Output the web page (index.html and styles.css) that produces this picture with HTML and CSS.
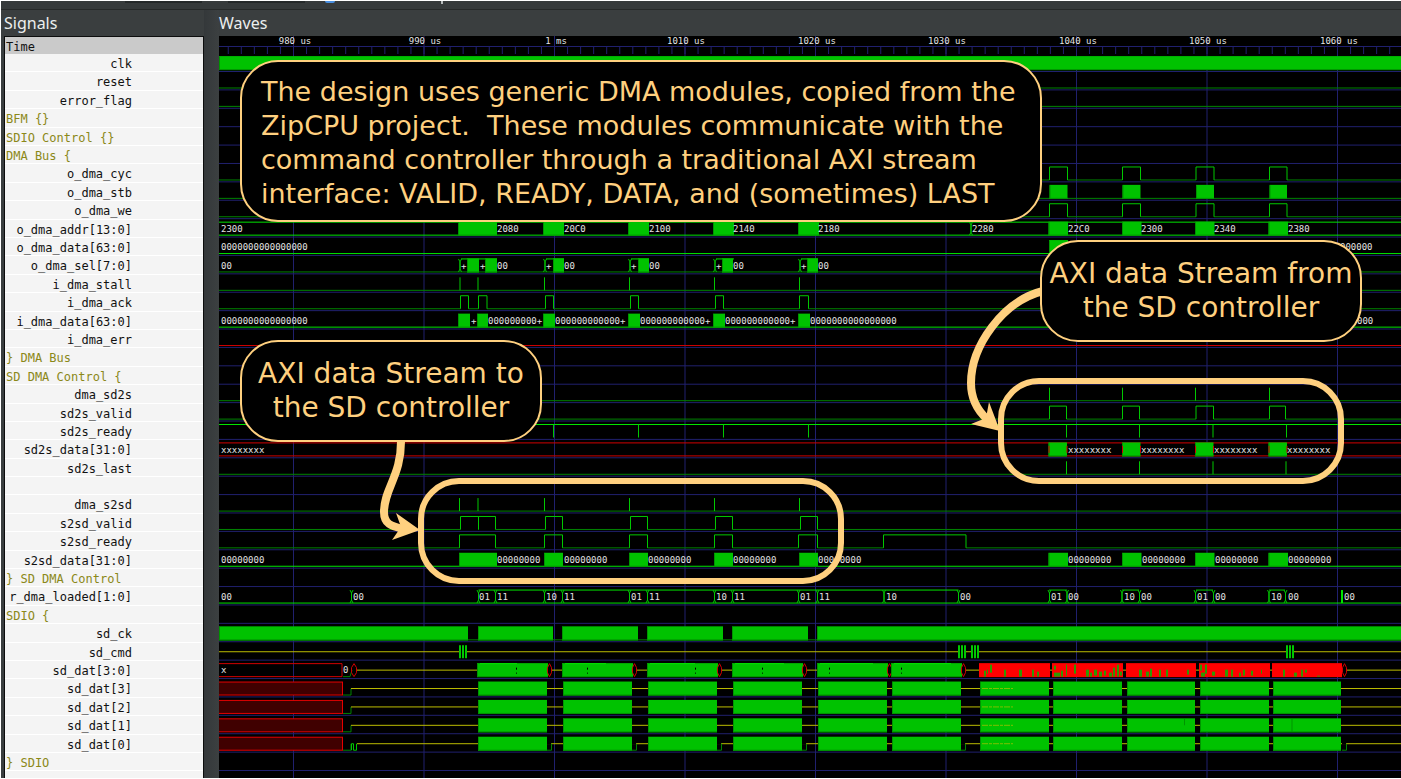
FILE: index.html
```html
<!DOCTYPE html>
<html lang="en">
<head>
<meta charset="utf-8">
<title>Waveform viewer</title>
<link rel="stylesheet" href="styles.css">
</head>
<body>
<header class="toolbar" aria-hidden="true">
  <span class="slot slot-a"></span><span class="slot slot-b"></span><span class="dot"></span><span class="stem"></span>
</header>
<main class="panes">
  <section class="signals">
    <h2 class="title">Signals</h2>
    <div class="list">
      <div class="time">Time</div>
      <ul class="names" id="names"></ul>
    </div>
  </section>
  <div class="divider" aria-hidden="true"></div>
  <section class="waves">
    <h2 class="title">Waves</h2>
    <div class="view">
      <svg class="plot" id="plot" role="img" aria-label="Signal waveforms"></svg>
      <svg class="marks" aria-hidden="true">
        <rect class="ring" x="202" y="445" width="420" height="100" rx="38"/>
        <rect class="ring" x="782" y="345" width="340" height="100" rx="38"/>
        <path class="arrow" d="M182 402C183 440 165 452 165 476C165 488 172 490 184 493"/>
        <path class="head" d="M201 494L177 477L182 491L173 504Z"/>
        <path class="arrow" d="M824 255C784 265 752 310 752 347C752 362 758 374 768 383"/>
        <path class="head" d="M781 395L770 366L767 382L752 388Z"/>
      </svg>
      <p class="note note-design">The design uses generic DMA modules, copied from the<br>ZipCPU project.&nbsp; These modules communicate with the<br>command controller through a traditional AXI stream<br>interface: VALID, READY, DATA, and (sometimes) LAST</p>
      <p class="note note-to">AXI data Stream to<br>the SD controller</p>
      <p class="note note-from">AXI data Stream from<br>the SD controller</p>
    </div>
  </section>
</main>
<script src="waves.js"></script>
</body>
</html>
```
FILE: styles.css
```css
* { box-sizing: border-box; }
body {
  margin: 0;
  height: 100vh;
  min-height: 500px;
  display: flex;
  flex-direction: column;
  border: 1px solid #fff;
  border-right: 0;
  background: #3a3e3f;
  overflow: hidden;
  font-family: "Noto Sans", sans-serif;
}
.toolbar {
  flex: none;
  height: 9px;
  display: flex;
  align-items: flex-start;
  background: #363a3b;
  border-bottom: 1px solid #262929;
}
.slot { height: 2px; background: #25292a; width: 77px; }
.slot-a { margin-left: 124px; }
.slot-b { margin-left: 26px; }
.dot { width: 10px; height: 2px; margin-left: 20px; background: #4a90e2; border-radius: 0 0 5px 5px; }
.stem { width: 2px; height: 3px; margin-left: 106px; background: #b8bcbc; }
.panes { flex: 1; min-height: 0; display: flex; }
.signals { width: 203px; flex: none; display: flex; flex-direction: column; padding-left: 3px; }
.waves { flex: 1; min-width: 0; display: flex; flex-direction: column; }
.title {
  margin: 0;
  height: 26px;
  flex: none;
  font-size: 16px;
  line-height: 26px;
  font-weight: 400;
  color: #eceeee;
}
.divider { width: 15px; flex: none; background: linear-gradient(90deg, #34383a, #3c4041); }
.list {
  flex: 1;
  min-height: 0;
  display: flex;
  flex-direction: column;
  border: solid #0c0d0d;
  border-width: 1px 1px 0;
  background: #f4f4f4;
  font: 12px/20px "DejaVu Sans Mono", monospace;
  color: #111;
}
.time { flex: none; height: 17px; padding-left: 1px; background: #cacaca; }
.names {
  flex: 1;
  min-height: 0;
  margin: 0;
  padding: 0;
  list-style: none;
  display: grid;
  grid-template-rows: repeat(39, 184fr) 66fr;
}
.name {
  min-height: 0;
  padding-right: 71px;
  text-align: right;
  white-space: pre;
  border-bottom: 1px solid #fff;
}
.group { text-align: left; padding: 0 0 0 1px; color: #8b8818; }
.view { position: relative; flex: 1; min-height: 0; overflow: hidden; background: #000; }
.plot, .marks { position: absolute; inset: 0; width: 100%; height: 100%; }
.plot text { font: 9px "DejaVu Sans Mono", monospace; fill: #e4e4e4; white-space: pre; }
.plot path { fill: none; }
.plot .grid { stroke: #20206e; }
.plot .low { stroke: #008400; }
.plot .high { stroke: #00c800; }
.plot .bus { stroke: #00e400; }
.plot .bad { stroke: #d00000; }
.plot .mid { stroke: #bcbc00; }
.plot .mid-dash { stroke: #7cc000; stroke-dasharray: 6 1 3 1; }
.plot .block { fill: #00c200; }
.plot .edge { stroke: #009400; }
.plot .unknown { fill: #400000; stroke: #e40000; }
.plot .red { fill: #ff0000; }
.plot .spark { fill: #309800; }
.ring { fill: none; stroke: #ffd07f; stroke-width: 6; }
.arrow { fill: none; stroke: #ffd07f; stroke-width: 8; }
.head { fill: #ffd07f; }
.note {
  position: absolute;
  margin: 0;
  border: 2px solid #ffd07f;
  border-radius: 38px;
  background: #000;
  color: #ffd07f;
  font: 28px/34px "DejaVu Sans", sans-serif;
  white-space: nowrap;
}
.note-design { left: 21px; top: 24px; width: 802px; padding: 13px 19px 9px; font-size: 27px; }
.note-to { left: 21px; top: 304px; width: 302px; padding: 15px 0; text-align: center; }
.note-from { left: 821px; top: 204px; width: 322px; padding: 15px 0; text-align: center; }
```
FILE: waves.js
```js
const NAMES = ["clk", "reset", "error_flag", "BFM {}", "SDIO Control {}", "DMA Bus {",
  "o_dma_cyc", "o_dma_stb", "o_dma_we", "o_dma_addr[13:0]", "o_dma_data[63:0]",
  "o_dma_sel[7:0]", "i_dma_stall", "i_dma_ack", "i_dma_data[63:0]", "i_dma_err",
  "} DMA Bus", "SD DMA Control {", "dma_sd2s", "sd2s_valid", "sd2s_ready",
  "sd2s_data[31:0]", "sd2s_last", "", "dma_s2sd", "s2sd_valid", "s2sd_ready",
  "s2sd_data[31:0]", "} SD DMA Control", "r_dma_loaded[1:0]", "SDIO {", "sd_ck",
  "sd_cmd", "sd_dat[3:0]", "sd_dat[3]", "sd_dat[2]", "sd_dat[1]", "sd_dat[0]", "} SDIO"];

const list = document.getElementById("names");
for (const n of NAMES) {
  const li = document.createElement("li");
  li.className = /[{}]/.test(n) ? "name group" : "name";
  li.textContent = n;
  list.append(li);
}

// Trace coordinates are window coordinates; OX and OY are the plot's origin.
const OX = 219, OY = 36, END = 4000;
const svg = document.getElementById("plot");
const base = i => 71.5 + 18.395 * i - OY;
const lo = i => base(i) - 1.9;
const hi = i => base(i) - 14.9;
const mid = i => base(i) - 8.4;

function add(tag, cls, attrs, text) {
  const e = document.createElementNS("http://www.w3.org/2000/svg", tag);
  if (cls) e.setAttribute("class", cls);
  for (const k in attrs) e.setAttribute(k, attrs[k]);
  if (text) e.textContent = text;
  svg.append(e);
}
const path = (cls, d) => add("path", cls, { d });
const hline = (cls, y, a = OX, b = END) => path(cls, `M${a - OX} ${y}H${b - OX}`);
const vline = (cls, x, y1, y2) => path(cls, `M${x - OX} ${y1}V${y2}`);
const label = (x, i, s) => add("text", "", { x: Math.round(x - OX), y: Math.round(base(i) - 5.1) }, s);
const labels = (i, items) => items.forEach(([x, s]) => label(x, i, s));
function block(i, a, b, cls = "block") {
  add("rect", cls, { x: a - OX, y: hi(i) - 0.5, width: b - a, height: lo(i) - hi(i) + 1 });
  if (cls === "block") { hline("edge", lo(i), a, b); vline("edge", a + 0.5, hi(i), lo(i)); }
}
const blocks = (i, items) => items.forEach(([a, b]) => block(i, a, b));
const spikes = (i, xs) => xs.forEach(x => vline("high", x, hi(i), lo(i)));
function pulses(i, items) {
  let x = OX, low = "", high = "";
  for (const [a, b] of items) {
    low += `M${x - OX} ${lo(i)}H${a - OX}`;
    high += `M${a - OX} ${lo(i)}V${hi(i)}H${b - OX}V${lo(i)}`;
    x = b;
  }
  path("low", low + `M${x - OX} ${lo(i)}H${END}`);
  path("high", high);
}
function cross(i, x) {
  const l = x - OX - 1.5, r = l + 3, m = x - OX;
  path("high", `M${l} ${hi(i)}L${m} ${hi(i) + 3}V${lo(i) - 3}L${l} ${lo(i)}M${r} ${hi(i)}L${m} ${hi(i) + 3}V${lo(i) - 3}L${r} ${lo(i)}`);
}
function lens(i, a, b) {
  const l = a - OX + 0.5, r = b - OX - 0.5, m = (l + r) / 2;
  add("path", "bad", { d: `M${m} ${hi(i)}L${l} ${hi(i) + 4}V${lo(i) - 4}L${m} ${lo(i)}L${r} ${lo(i) - 4}V${hi(i) + 4}Z` });
}

// Grid and time scale
for (let i = 0; i < NAMES.length; i++) hline("grid", base(i));
hline("grid", 10.5);
for (let k = -5; k < 200; k++) vline("grid", 293.5 + 13.05 * k, 10, 18);
for (let k = 0; k < 20; k++) vline("grid", 293.5 + 130.5 * k, 0, 743);
["980 us", "990 us", "1 ms", "1010 us", "1020 us", "1030 us", "1040 us", "1050 us", "1060 us"].forEach((s, k) =>
  add("text", "", { x: Math.round(294.5 + 130.5 * k - OX), y: 8, "text-anchor": "middle" }, s));

// Clock and DMA bus
block(0, OX, END);
[1, 2, 12, 18, 22, 24].forEach(i => hline("low", lo(i)));
const READS = [[1049.5, 1067.5], [1122.5, 1140.5], [1196, 1214], [1269.5, 1287]];
pulses(6, READS);
hline("low", lo(7));
blocks(7, READS);
pulses(8, READS);
hline("bus", hi(9)); hline("bus", lo(9));
const WRITE_BLOCKS = [[543, 564], [628, 649], [713, 734], [798, 819]];
const READ_BLOCKS = [[1048.5, 1068], [1122, 1141.5], [1195, 1214.5], [1268.5, 1288]];
blocks(9, [[458, 497], ...WRITE_BLOCKS, ...READ_BLOCKS]);
cross(9, 971);
labels(9, [[221, "2300"], [497, "2080"], [564, "20C0"], [649, "2100"], [733, "2140"], [818, "2180"], [972, "2280"],
  [1068, "22C0"], [1141, "2300"], [1214, "2340"], [1288, "2380"]]);
const ZEROS = "0".repeat(16);
hline("bus", lo(10)); block(10, 1049, 1068);
labels(10, [[221, ZEROS], [1340, "000000"]]);
hline("low", lo(11));
[[460, 497], [545, 564], [630, 649], [715, 734], [800, 818]].forEach(([a, b]) => { hline("bus", hi(11), a + 1, b); cross(11, a); });
blocks(11, [[467, 479], [485, 497], [553, 564], [638, 649], [722, 733], [807, 818]]);
labels(11, [[221, "00"], [461, "+"], [480, "+"], [497, "00"], [546, "+"], [564, "00"], [631, "+"], [649, "00"],
  [716, "+"], [733, "00"], [801, "+"], [818, "00"]]);
spikes(12, [460, 478, 544.5, 629.5, 714.5, 799.5]);
pulses(13, [[460.5, 468.5], [478.5, 487], [545.5, 553.5], [630.5, 638.5], [715.5, 723.5], [799.5, 808.5]]);
hline("bus", lo(14));
blocks(14, [[458, 470], [477, 488], [543, 555], [628, 640], [713, 725], [798, 810]]);
labels(14, [[221, ZEROS], [471, "+"], [488, "000000000+"], [555, "000000000000+"], [640, "000000000000+"],
  [725, "000000000000+"], [810, ZEROS], [1357, "000"]]);
hline("bad", lo(15));

// Card-to-system stream
spikes(18, [1049.5, 1122.5, 1195.5, 1269.5]);
pulses(19, [[1049.5, 1066.5], [1122.5, 1139.5], [1196, 1213.5], [1269.5, 1285.5]]);
hline("bus", hi(20));
spikes(20, [553.5, 638.5, 723.5, 808.5, 1066.5, 1139.5, 1213, 1286.5]);
hline("bad", hi(21)); hline("bad", lo(21));
READ_BLOCKS.forEach(([a, b]) => { block(21, a, b - 1); vline("bad", a + 0.5, hi(21) + 3, lo(21) - 3); vline("bad", b - 1, hi(21) + 3, lo(21) - 3); });
labels(21, [221, 1068, 1141, 1214, 1287].map(x => [x, "xxxxxxxx"]));
spikes(22, [1066.5, 1139.5, 1213, 1286]);

// System-to-card stream
spikes(24, [459.5, 478, 544.5, 629.5, 714.5, 799.5]);
pulses(25, [[460.5, 478.5], [478.5, 495.5], [545.5, 562.5], [630.5, 647.5], [715.5, 732.5], [800.5, 817.5]]);
pulses(26, [[459.5, 495.5], [544.5, 562.5], [629.5, 647.5], [714.5, 732.5], [798.5, 817.5], [883.5, 966]]);
hline("bus", lo(27));
blocks(27, [[459, 497], [544, 563], [629, 648], [714, 733], [799, 818], ...READ_BLOCKS]);
labels(27, [221, 497, 564, 648, 733, 818, 1068, 1142, 1215, 1288].map(x => [x, "00000000"]));

hline("bus", lo(29));
hline("bus", hi(29), 478.5, 958.5);
[[1049, 1067], [1122, 1139], [1196, 1213], [1269, 1285]].forEach(([a, b]) => hline("high", hi(29), a, b));
[351.5, 478.5, 495.5, 544.5, 562.5, 629.5, 647.5, 714.5, 732.5, 798.5, 817.5, 884, 958.5,
  1049.5, 1067, 1122, 1139.5, 1195.5, 1213.5, 1269, 1285.5].forEach(x => cross(29, x));
vline("bus", 1341.5, hi(29), lo(29)); vline("bus", 1342.5, hi(29), lo(29));
labels(29, [[221, "00"], [353, "00"], [479, "01"], [497, "11"], [546, "10"], [564, "11"], [631, "01"], [649, "11"],
  [716, "10"], [734, "11"], [800, "01"], [819, "11"], [886, "10"], [960, "00"], [1051, "01"], [1068, "00"],
  [1124, "10"], [1141, "00"], [1197, "01"], [1215, "00"], [1271, "10"], [1288, "00"], [1344, "00"]]);

// SD card pins
hline("low", lo(31));
blocks(31, [[219, 468], [478, 553], [562, 638], [647, 723], [732, 808], [817, END]]);
hline("mid", mid(32));
[459, 958, 971, 1286].forEach(x => {
  add("rect", "", { x: x - OX, y: hi(32), width: 8, height: 13, fill: "#000" });
  [0.5, 1.5, 3.5, 4.5, 6.5, 7.5].forEach(d => vline("high", x + d, hi(32), lo(32)));
});

const WRITES = [[478, 547], [563, 632], [648, 717], [733, 802], [818, 887], [892, 961]];
const READBACK = [[980, 1049], [1053, 1122], [1127, 1195], [1200, 1269], [1273, 1341]];
path("bad", `M0 ${hi(33)}H123V${lo(33)}H0`);
path("low", `M124 ${lo(33)}H131L133 ${mid(33)}`);
hline("mid", mid(33), 357);
lens(33, 351, 357);
labels(33, [[221, "x"], [343, "0"]]);
WRITES.forEach(([a, b], k) => {
  block(33, a - 1, b + 1);
  hline("bus", hi(33), a + 2, b - 30 + k * 4);
  const x = a - OX + [38, 24, 47, 29, 11, 9][k];
  add("rect", "", { x, y: hi(33) + 4, width: 1, height: 2, fill: "#000" });
  add("rect", "", { x, y: hi(33) + 9, width: 1, height: 1, fill: "#000" });
  add("rect", "", { x: b + 1 - OX, y: hi(33), width: 4, height: 13, fill: "#000" });
  lens(33, b, b + 5);
});
READBACK.forEach(([a, b]) => block(33, a - 1, b + 1, "red"));
add("rect", "", { x: 1342 - OX, y: hi(33), width: 4, height: 13, fill: "#000" });
lens(33, 1342, 1347);
// Short glitches: x, top offset, width, height
[[984, 7, 2, 6], [987, 6, 1, 4], [990, 1, 2, 8], [1004, 6, 2, 7], [1019, 6, 3, 7], [1032, 6, 2, 7], [1037, 8, 2, 5],
  [1054, 2, 2, 4], [1054, 9, 6, 4], [1061, 7, 2, 6], [1066, 1, 1, 11], [1074, 1, 2, 9], [1086, 6, 3, 7], [1090, 9, 2, 4],
  [1094, 6, 3, 6], [1099, 8, 3, 5], [1104, 7, 2, 5], [1109, 9, 3, 4], [1113, 4, 2, 9], [1117, 1, 2, 12], [1120, 8, 2, 4],
  [1139, 6, 3, 7], [1146, 8, 3, 5], [1150, 5, 2, 8], [1159, 6, 2, 7], [1166, 6, 2, 7], [1187, 6, 2, 5],
  [1200, 1, 2, 6], [1201, 9, 4, 4], [1205, 1, 2, 9], [1212, 8, 3, 4], [1225, 6, 3, 7], [1231, 6, 2, 7], [1239, 9, 2, 4],
  [1243, 6, 2, 6], [1251, 7, 2, 5], [1261, 6, 1, 4], [1283, 6, 2, 7], [1294, 9, 3, 4], [1301, 6, 2, 7], [1305, 6, 2, 3], [1317, 12, 3, 1]]
  .forEach(([x, y, w, h]) => add("rect", "spark", { x: x - OX, y: hi(33) + y, width: w, height: h }));

for (let i = 34; i <= 37; i++) {
  add("rect", "unknown", { x: -1, y: hi(i), width: 124.5, height: 13 });
  path("low", `M124 ${lo(i)}H132V${mid(i)}`);
  if (i < 37) hline("mid", mid(i), 351);
  else {
    hline("mid", mid(i), 357);
    path("high", `M132.5 ${lo(i)}V${mid(i)}H134.5V${lo(i)}H137.5V${mid(i)}`);
    [547, 632, 717, 802, 961, 1342].forEach(x => {
      add("rect", "", { x: x - OX, y: mid(i) - 1, width: 4, height: 2, fill: "#000" });
      path("low", `M${x - OX} ${lo(i)}H${x + 4.5 - OX}V${mid(i)}`);
    });
  }
  blocks(i, [...WRITES, ...READBACK]);
  hline("mid-dash", mid(i), 982, 1013);
}
vline("edge", 1184.5, hi(36), mid(36));
vline("edge", 1292, hi(36), lo(36));
```
